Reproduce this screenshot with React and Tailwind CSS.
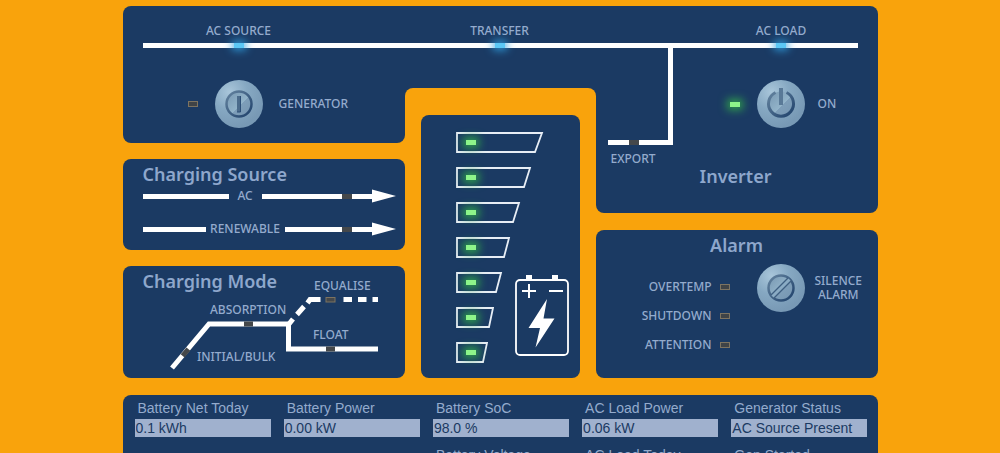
import React from "react";

const glow = {
  blue: "h-[5px] bg-[#5cc8f5] shadow-[0_0_8px_2px_#2f9fe0]",
  green: "h-[5px] bg-[#8df58a] shadow-[0_0_8px_3px_#2f9f4c]",
  off: "h-[6px] bg-[#3f4347] border border-[#7d7361]",
  dark: "h-[5px] bg-[#45484b]",
};

function Led({ tone = "off", className = "" }) {
  return <span className={`block w-[10px] shrink-0 ${glow[tone]} ${className}`} />;
}

function Label({ children, className = "" }) {
  return <span className={`text-xs leading-[14px] font-medium ${className}`}>{children}</span>;
}

function Title({ children, className = "" }) {
  return <h2 className={`text-[18px] leading-6 font-semibold text-[#8ea7cc] ${className}`}>{children}</h2>;
}

function RoundButton({ label, children }) {
  return (
    <button type="button" aria-label={label} className="size-12 shrink-0 rounded-full">
      <svg viewBox="0 0 48 48" className="size-12" fill="none">
        <defs>
          <radialGradient id="metal" cx="0.3" cy="0.25" r="0.75">
            <stop offset="0" stopColor="#a9c6da" />
            <stop offset="0.5" stopColor="#86a8c2" />
            <stop offset="1" stopColor="#7899b5" />
          </radialGradient>
          <linearGradient id="ring" x1="0" y1="0" x2="1" y2="1">
            <stop offset="0" stopColor="#64839f" />
            <stop offset="1" stopColor="#1f416b" />
          </linearGradient>
          <linearGradient id="face" x1="0" y1="0" x2="1" y2="1">
            <stop offset="0" stopColor="#7797b1" />
            <stop offset="0.55" stopColor="#93b4ca" />
            <stop offset="0.56" stopColor="#7e9eb9" />
            <stop offset="1" stopColor="#7595b1" />
          </linearGradient>
        </defs>
        <circle cx="24" cy="24" r="24" fill="url(#metal)" />
        {children}
      </svg>
    </button>
  );
}

function BusNode({ label, className = "" }) {
  return (
    <div className={`flex flex-col items-center ${className}`}>
      <Label>{label}</Label>
      <Led tone="blue" className="mt-[5px]" />
    </div>
  );
}

function SourceLine({ label }) {
  return (
    <div className="flex h-[14px] items-center">
      <span className={`h-[5px] bg-white ${label === "AC" ? "w-[86px]" : "w-[63px]"}`} />
      <Label className={`text-center ${label === "AC" ? "w-[33px]" : "w-[79px]"}`}>{label}</Label>
      <span className="flex h-[5px] flex-1 justify-end bg-white">
        <Led tone="dark" className="mr-5" />
      </span>
      <svg viewBox="0 0 24 14" className="h-[14px] w-6">
        <path d="M0 0.5 24 7 0 13.5Z" fill="#fff" />
      </svg>
    </div>
  );
}

function ChargingModeChart() {
  return (
    <svg
      viewBox="0 0 282 112"
      className="col-start-1 row-start-1 w-full"
      fill="none"
      stroke="#fff"
      strokeWidth="5"
      role="img"
      aria-label="Charging mode"
    >
      <path d="M49 102 86 58H168" />
      <path d="M165.5 58V83H255" />
      <path d="M166 58 170 53M174 48.5 181 40.5M184.5 37 187 33.5H197.5" />
      <path d="M220.500 33.500H229M235 33.500H243.500M249.500 33.500H255" />
      <g stroke="none" fill="#45484b">
        <rect x="121" y="55.5" width="9" height="5" />
        <rect x="203" y="80.5" width="9" height="5" />
        <rect x="203" y="31.5" width="9" height="4.5" stroke="#7d7361" strokeWidth="1" />
        <rect x="-4.5" y="-2.5" width="9" height="5" transform="translate(62.5 86.5) rotate(-50)" />
      </g>
      <g stroke="none" fill="#94abcd" fontSize="12" fontWeight="500">
        <text x="191" y="24">EQUALISE</text>
        <text x="87" y="48">ABSORPTION</text>
        <text x="190" y="73">FLOAT</text>
        <text x="74" y="95">INITIAL/BULK</text>
      </g>
    </svg>
  );
}

const levels = [86, 74, 63, 53, 45, 37, 31];

function BatteryLevel({ width }) {
  const slant = 2 + Math.round(width / 17);
  return (
    <div className="grid h-[21px] items-center">
      <svg className="col-start-1 row-start-1 h-[21px] w-[90px]" fill="none" stroke="#e8eef6" strokeWidth="1.8">
        <path d={`M1 1H${width}L${width - slant} 20H1Z`} />
      </svg>
      <Led tone="green" className="col-start-1 row-start-1 ml-[10px]" />
    </div>
  );
}

function BatteryIcon() {
  return (
    <svg viewBox="0 0 54 82" className="h-[82px] w-[54px]" fill="none" stroke="#fff">
      <rect x="1" y="6" width="52" height="75" rx="4" strokeWidth="1.8" />
      <path d="M11 1h6v5h-6zM37 1h6v5h-6z" fill="#fff" stroke="none" />
      <path d="M7 17H21M14 10V24M34 17H48" strokeWidth="2" />
      <path d="M32 25 13.500 54H25L20.500 73.500 39.500 44.500H28.500Z" fill="#fff" stroke="none" />
    </svg>
  );
}

const readings = [
  { label: "Battery Net Today", value: "0.1 kWh" },
  { label: "Battery Power", value: "0.00 kW" },
  { label: "Battery SoC", value: "98.0 %" },
  { label: "AC Load Power", value: "0.06 kW" },
  { label: "Generator Status", value: "AC Source Present" },
  { label: "Battery Voltage", value: "", column: "col-start-3" },
  { label: "AC Load Today", value: "" },
  { label: "Gen Started", value: "" },
];

function Reading({ label, value, column = "" }) {
  return (
    <label className={`block min-w-0 ${column}`}>
      <span className="block pl-[3px] leading-4">{label}</span>
      <input
        readOnly
        defaultValue={value}
        className="mt-[3px] block h-[18px] w-full bg-[#a0b1ce] px-px text-[#1b3a63]"
      />
    </label>
  );
}

export default function App() {
  return (
    <main className="h-screen overflow-hidden bg-[#f9a30c] pt-[6px] font-['Noto_Sans',sans-serif] text-[#94abcd]">
      <div className="mx-auto max-w-[755px]">
        <header className="grid h-[82px] rounded-t-lg bg-[#1b3a63] pt-[18px]">
          <span className="col-start-1 row-start-1 mx-5 mt-[19px] h-[5px] bg-white" />
          <div className="col-start-1 row-start-1 grid grid-cols-[232fr_290fr_233fr]">
            <BusNode label="AC SOURCE" />
            <BusNode label="TRANSFER" />
            <BusNode label="AC LOAD" className="pl-10" />
          </div>
        </header>

        <div className="grid grid-cols-[282fr_191fr_282fr]">
          <div className="flex flex-col gap-4">
            <section className="h-[55px] rounded-b-lg bg-[#1b3a63]">
              <div className="-mt-2 flex items-center pl-[65px]">
                <Led />
                <div className="ml-[17px] flex items-center gap-4">
                  <RoundButton label="Generator">
                    <circle cx="24" cy="24" r="12.5" fill="url(#face)" stroke="url(#ring)" strokeWidth="2.5" />
                    <path d="M24 16V32" stroke="#4b6b8b" strokeWidth="4" />
                    <path d="M25.5 16V32H22" stroke="#2c4e76" strokeWidth="1" />
                  </RoundButton>
                  <Label>GENERATOR</Label>
                </div>
              </div>
            </section>

            <section className="h-[91px] rounded-lg bg-[#1b3a63] pt-[3px] pr-[9px] pl-5">
              <Title>Charging Source</Title>
              <div className="mt-[3px] flex flex-col gap-[19px]">
                <SourceLine label="AC" />
                <SourceLine label="RENEWABLE" />
              </div>
            </section>

            <section className="grid h-[112px] rounded-lg bg-[#1b3a63]">
              <Title className="col-start-1 row-start-1 pt-[3px] pl-5">Charging Mode</Title>
              <ChargingModeChart />
            </section>
          </div>

          <div>
            <div className="bg-[#1b3a63]">
              <div className="h-[27px] rounded-t-lg bg-[#f9a30c]" />
            </div>
            <section className="mx-4 flex h-[263px] justify-between rounded-lg bg-[#1b3a63] pt-[17px] pr-[11px] pl-[35px]">
              <div className="flex w-[59px] flex-col gap-[14px]">
                {levels.map((width) => (
                  <BatteryLevel key={width} width={width} />
                ))}
              </div>
              <div className="self-end pb-[22px]">
                <BatteryIcon />
              </div>
            </section>
          </div>

          <div className="flex flex-col gap-[17px]">
            <section className="flex h-[125px] rounded-b-lg bg-[#1b3a63] pl-3">
              <div className="-mt-10 w-[65px]">
                <div className="flex h-[97px] items-end border-r-[5px] border-white">
                  <div className="h-[5px] w-full bg-white pl-[21px]">
                    <Led tone="dark" />
                  </div>
                </div>
                <Label className="block pt-[7px] pl-[3px]">EXPORT</Label>
              </div>
              <div className="-mt-2 pl-[57px]">
                <div className="flex items-center">
                  <Led tone="green" />
                  <div className="ml-[17px] flex items-center gap-[13px]">
                    <RoundButton label="Inverter power">
                      <circle cx="24" cy="24" r="12.5" fill="url(#face)" />
                      <path d="M18.5 12.5A12.5 12.5 0 1 0 29.5 12.5" stroke="url(#ring)" strokeWidth="3" />
                      <path d="M24 8V25" stroke="#597997" strokeWidth="4" />
                    </RoundButton>
                    <Label>ON</Label>
                  </div>
                </div>
                <Title className="-ml-[30px] pt-9">Inverter</Title>
              </div>
            </section>

            <section className="h-[148px] rounded-lg bg-[#1b3a63] pt-[3px]">
              <Title className="text-center">Alarm</Title>
              <div className="flex pt-px">
                <div className="flex w-[134px] flex-col items-end gap-[15px] pt-[22px]">
                  {["OVERTEMP", "SHUTDOWN", "ATTENTION"].map((name) => (
                    <div key={name} className="flex items-center gap-2">
                      <Label>{name}</Label>
                      <Led />
                    </div>
                  ))}
                </div>
                <div className="flex h-12 items-center gap-[10px] pt-[12px] pl-[27px]">
                  <RoundButton label="Silence alarm">
                    <circle cx="24" cy="24" r="12.5" fill="url(#face)" stroke="url(#ring)" strokeWidth="2.5" />
                    <path d="M15.5 32.5 32.5 15.5" stroke="#3e5f81" strokeWidth="5.500" />
                    <path d="M15.5 32.5 32.5 15.5" stroke="#8aabc4" strokeWidth="3" />
                  </RoundButton>
                  <Label className="text-center">
                    SILENCE
                    <br />
                    ALARM
                  </Label>
                </div>
              </div>
            </section>
          </div>
        </div>

        <section className="mt-[17px] grid grid-cols-5 gap-x-[13px] gap-y-[10px] rounded-lg bg-[#1b3a63] pt-[5px] pr-[10px] pb-4 pl-3 font-['Liberation_Sans',sans-serif] text-[14px]">
          {readings.map((reading) => (
            <Reading key={reading.label} {...reading} />
          ))}
        </section>
      </div>
    </main>
  );
}
